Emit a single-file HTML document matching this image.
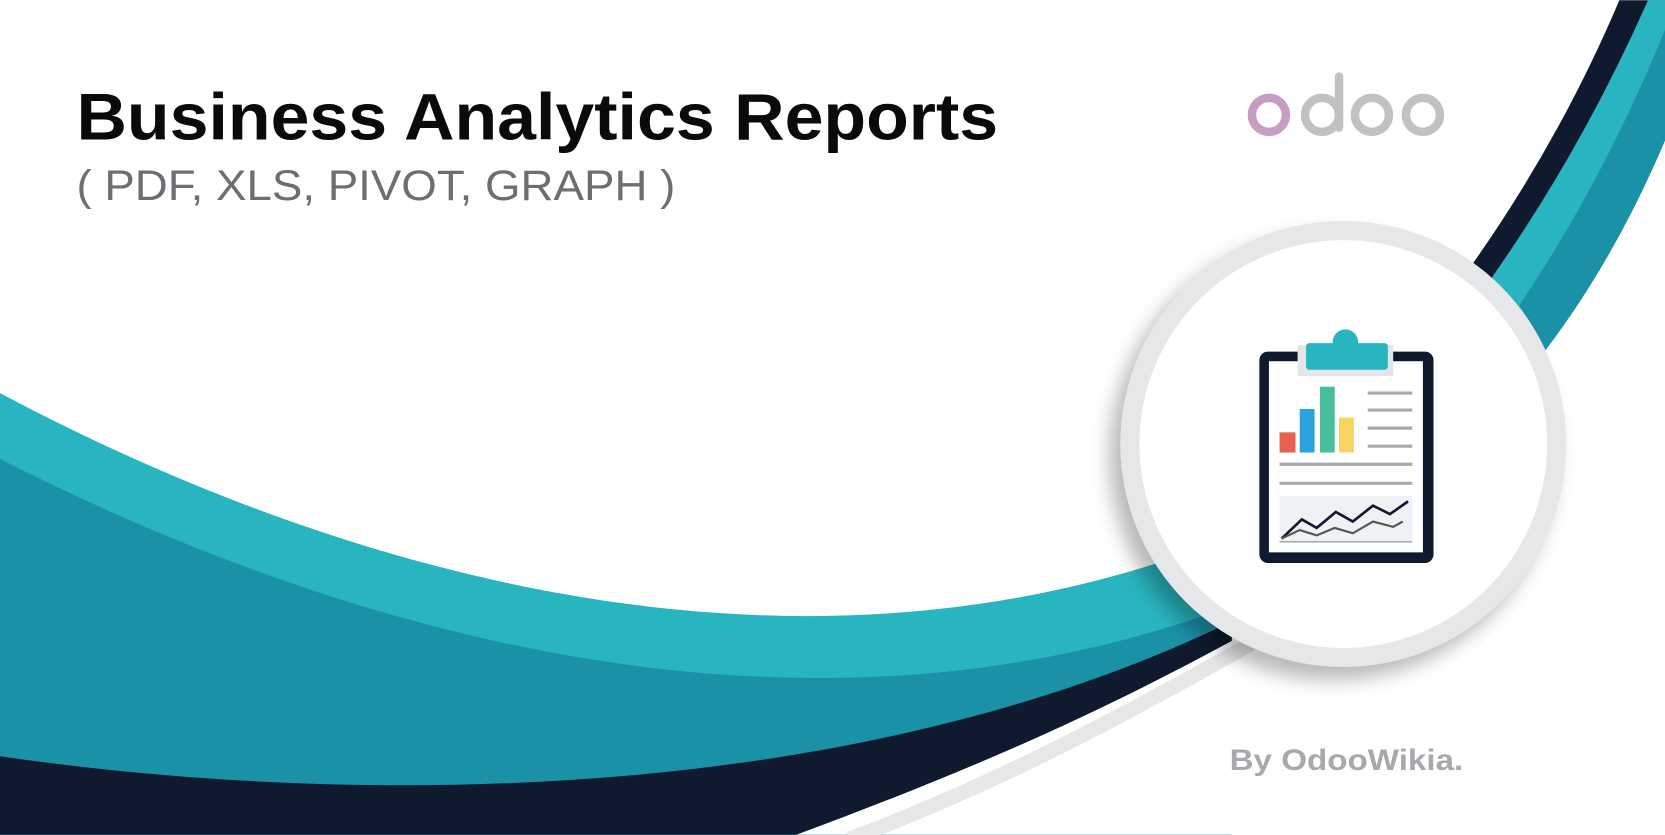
<!DOCTYPE html>
<html><head><meta charset="utf-8"><style>html,body{margin:0;padding:0;background:#fff;overflow:hidden}svg{display:block}</style></head>
<body>
<svg width="1665" height="835" viewBox="0 0 1568 786" xmlns="http://www.w3.org/2000/svg">
<defs>
<filter id="sh" x="-20%" y="-20%" width="140%" height="140%"><feGaussianBlur stdDeviation="9"/></filter>
</defs>
<rect width="1568" height="786" fill="#fff"/>
<!-- top right bands -->
<path d="M1525,0 Q1470,130 1387,248 L1455,330 Q1520,245 1568,132 L1568,0 Z" fill="#0f1a2e"/>
<path d="M1552,0 Q1490,140 1405,261 L1455,330 Q1520,245 1568,132 L1568,0 Z" fill="#29b5bf"/>
<path d="M1568,28 Q1510,170 1431,287 L1455,330 Q1520,245 1568,132 Z" fill="#1b91a8"/>
<!-- lower swoosh -->
<path d="M0,370 C330,545 760,665 1160,505 L1160,786 L0,786 Z" fill="#29b5bf"/>
<path d="M0,432 C330,600 760,720 1160,570 L1160,786 L0,786 Z" fill="#1b91a8"/>
<path d="M0,712 C330,760 800,760 1160,585 L1160,786 L0,786 Z" fill="#0f1a2e"/>
<path d="M750,786 C900,730 1020,680 1170,598 L1568,598 L1568,786 Z" fill="#fff"/>
<path d="M1178,606 C1030,690 920,745 800,790" fill="none" stroke="#e6e7e8" stroke-width="14"/>
<!-- circle -->
<circle cx="1255" cy="430" r="210" fill="#000" opacity="0.28" filter="url(#sh)"/>
<circle cx="1265" cy="418" r="210" fill="#e6e7e8"/>
<circle cx="1265" cy="418" r="192" fill="#fff"/>
<!-- clipboard -->
<rect x="1186" y="331" width="164" height="199" rx="8" fill="#0f1a2e"/>
<rect x="1195" y="340" width="145" height="180" fill="#fff"/>
<rect x="1222" y="325" width="90" height="29" fill="#e2e6ea"/>
<circle cx="1267" cy="322" r="12" fill="#29b5bf"/>
<rect x="1230" y="323" width="77" height="25" rx="3" fill="#29b5bf"/>
<rect x="1205" y="407" width="15" height="19" fill="#e8604f"/>
<rect x="1224" y="385" width="14" height="41" fill="#2ba2dc"/>
<rect x="1243" y="364" width="14" height="62" fill="#47bf9c"/>
<rect x="1261" y="393" width="14" height="33" fill="#f9d361"/>
<g stroke="#a7a9ac" stroke-width="3">
<line x1="1288" y1="370" x2="1330" y2="370"/><line x1="1288" y1="386" x2="1330" y2="386"/>
<line x1="1288" y1="403" x2="1330" y2="403"/><line x1="1288" y1="420" x2="1330" y2="420"/>
<line x1="1205" y1="437" x2="1330" y2="437"/><line x1="1205" y1="455" x2="1330" y2="455"/>
</g>
<rect x="1205" y="467" width="125" height="44" fill="#eef2f5"/>
<line x1="1205" y1="510" x2="1330" y2="510" stroke="#a7a9ac" stroke-width="1.5"/>
<polyline points="1207,507 1226,489 1240,497 1258,482 1274,491 1293,476 1309,484 1326,472" fill="none" stroke="#0f1a2e" stroke-width="2.5"/>
<polyline points="1207,507 1224,499 1240,504 1257,497 1274,502 1293,491 1312,496 1321,491" fill="none" stroke="#555" stroke-width="2"/>
<!-- text -->
<text x="72" y="131" font-family="Liberation Sans, sans-serif" font-size="62" font-weight="bold" fill="#0a0a0a" textLength="868" lengthAdjust="spacingAndGlyphs">Business Analytics Reports</text>
<text x="72" y="188" font-family="Liberation Sans, sans-serif" font-size="40" fill="#6d6e71" textLength="564" lengthAdjust="spacingAndGlyphs">( PDF, XLS, PIVOT, GRAPH )</text>
<!-- odoo -->
<circle cx="1195" cy="108" r="16" fill="none" stroke="#c69ec3" stroke-width="8"/>
<circle cx="1245" cy="108" r="16" fill="none" stroke="#c2c0c1" stroke-width="8"/>
<line x1="1261" y1="72" x2="1261" y2="120" stroke="#c2c0c1" stroke-width="8" stroke-linecap="round"/>
<circle cx="1292" cy="108" r="16" fill="none" stroke="#c2c0c1" stroke-width="8"/>
<circle cx="1340" cy="108" r="16" fill="none" stroke="#c2c0c1" stroke-width="8"/>
<text x="1158" y="725" font-family="Liberation Sans, sans-serif" font-size="28" font-weight="bold" fill="#a7a9ac" textLength="220" lengthAdjust="spacingAndGlyphs">By OdooWikia.</text>
</svg>
</body></html>
